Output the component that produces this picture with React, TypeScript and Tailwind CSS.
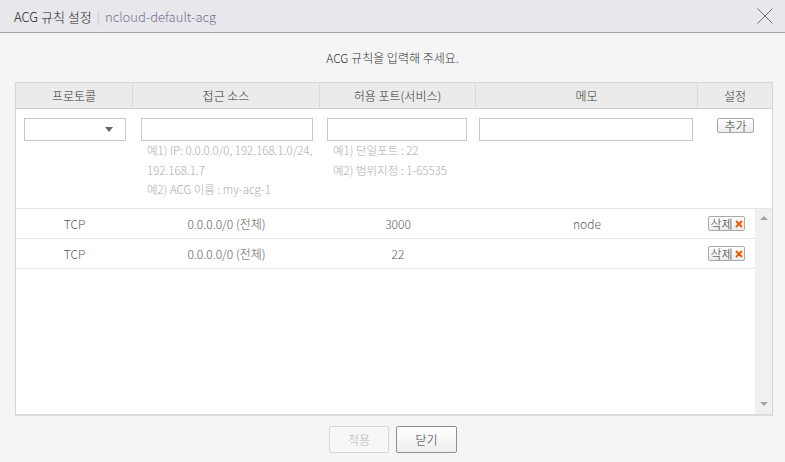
import React from 'react';

const font = { fontFamily: '"Noto Sans CJK KR", "Noto Sans", sans-serif' };

const rows = [
  { proto: 'TCP', source: '0.0.0.0/0 (전체)', port: '3000', memo: 'node' },
  { proto: 'TCP', source: '0.0.0.0/0 (전체)', port: '22', memo: '' },
];

const DeleteButton: React.FC = () => (
  <button className="flex h-[15px] w-[37px] items-center justify-center gap-[2px] rounded-[2px] border border-[#a9a9a9] bg-gradient-to-b from-white to-[#ececec] text-[12px] leading-none text-[#333]">
    <span>삭제</span>
    <svg width="8" height="8" viewBox="0 0 8 8">
      <path d="M1 1 L7 7 M7 1 L1 7" stroke="#f05a00" strokeWidth="2" />
    </svg>
  </button>
);

const App: React.FC = () => {
  return (
    <div className="h-[462px] w-[785px] overflow-hidden bg-[#f5f5f5] font-light text-[#333]" style={font}>
      {/* Header */}
      <div className="flex h-[33px] items-center justify-between border-b border-[#a3a2a8] bg-[#e8e7ec] pl-[14px] pr-[12px]">
        <div className="flex items-center text-[13px] leading-none">
          <span className="text-[#222]">ACG 규칙 설정</span>
          <span className="mx-[5px] text-[#c2c1c8]">|</span>
          <span className="text-[#767490]">ncloud-default-acg</span>
        </div>
        <svg width="16" height="16" viewBox="0 0 16 16" className="mt-[-1px]">
          <path d="M0.5 0.5 L15.5 15.5 M15.5 0.5 L0.5 15.5" stroke="#6d6d72" strokeWidth="1" />
        </svg>
      </div>

      {/* Body */}
      <div className="px-[15px]">
        <p className="pt-[16px] pb-[15px] text-center text-[12px] leading-[18px] text-[#333]">
          ACG 규칙을 입력해 주세요.
        </p>

        <div className="w-[758px] border-x border-t border-b-2 border-x-[#d6d6d6] border-t-[#d6d6d6] border-b-[#dcdce0] bg-white">
          {/* Column header */}
          <div className="grid h-[26px] grid-cols-[117px_187px_156px_222px_1fr] border-b border-[#cfcfcf] bg-[#ebebeb] text-[12px] leading-[25px] text-[#333]">
            <div className="border-r border-[#d9d9d9] text-center">프로토콜</div>
            <div className="border-r border-[#d9d9d9] text-center">접근 소스</div>
            <div className="border-r border-[#d9d9d9] text-center">허용 포트(서비스)</div>
            <div className="border-r border-[#d9d9d9] text-center">메모</div>
            <div className="text-center">설정</div>
          </div>

          {/* Input row */}
          <div className="grid h-[100px] grid-cols-[117px_187px_156px_222px_1fr] border-b border-[#e6e6e6] pt-[9px]">
            <div className="pl-[8px]">
              <div className="flex h-[23px] w-[102px] items-center justify-end border border-[#c8c8c8] bg-white pr-[12px]">
                <svg width="8" height="5" viewBox="0 0 8 5">
                  <path d="M0 0 L8 0 L4 5 Z" fill="#666" />
                </svg>
              </div>
            </div>
            <div className="pl-[8px]">
              <div className="h-[23px] w-[172px] border border-[#c8c8c8] bg-white" />
              <div className="pl-[6px] text-[11.5px] leading-[19.5px] text-[#ababab]">
                <div>예1) IP: 0.0.0.0/0, 192.168.1.0/24,</div>
                <div>192.168.1.7</div>
                <div>예2) ACG 이름 : my-acg-1</div>
              </div>
            </div>
            <div className="pl-[7px]">
              <div className="h-[23px] w-[140px] border border-[#c8c8c8] bg-white" />
              <div className="pl-[6px] text-[11.5px] leading-[19.5px] text-[#ababab]">
                <div>예1) 단일포트 : 22</div>
                <div>예2) 범위지정 : 1-65535</div>
              </div>
            </div>
            <div className="pl-[3px]">
              <div className="h-[23px] w-[214px] border border-[#c8c8c8] bg-white" />
            </div>
            <div className="flex justify-end pr-[18px]">
              <button className="h-[15px] w-[37px] rounded-[2px] border border-[#a9a9a9] bg-gradient-to-b from-white to-[#ececec] text-[12px] leading-none text-[#333]">
                추가
              </button>
            </div>
          </div>

          {/* Data rows + scrollbar */}
          <div className="flex h-[205px]">
            <div className="flex-1">
              {rows.map((r, i) => (
                <div
                  key={i}
                  className="grid h-[30px] grid-cols-[117px_187px_156px_222px_1fr] items-center border-b border-[#e6e6e6] text-[12px] text-[#5a5a5a]"
                >
                  <div className="text-center">{r.proto}</div>
                  <div className="text-center">{r.source}</div>
                  <div className="text-center">{r.port}</div>
                  <div className="text-center">{r.memo}</div>
                  <div className="flex justify-center">
                    <DeleteButton />
                  </div>
                </div>
              ))}
            </div>
            <div className="flex w-[17px] flex-col items-center justify-between bg-[#f0f0f0] pt-[7px] pb-[8px]">
              <svg width="8" height="4" viewBox="0 0 8 4">
                <path d="M0 4 L8 4 L4 0 Z" fill="#a3a3a3" />
              </svg>
              <svg width="8" height="4" viewBox="0 0 8 4">
                <path d="M0 0 L8 0 L4 4 Z" fill="#a3a3a3" />
              </svg>
            </div>
          </div>
        </div>

        {/* Footer */}
        <div className="flex justify-center gap-[7px] pt-[10px] pl-[1px]">
          <button className="h-[27px] w-[60px] rounded-[2px] border border-[#d6d6d6] bg-[#f7f7f7] text-[12px] text-[#b3b3b3]">
            적용
          </button>
          <button className="h-[27px] w-[61px] rounded-[2px] border border-[#8e8e8e] bg-gradient-to-b from-white to-[#eeeeee] text-[12px] text-[#333]">
            닫기
          </button>
        </div>
      </div>
    </div>
  );
};

export default App;
